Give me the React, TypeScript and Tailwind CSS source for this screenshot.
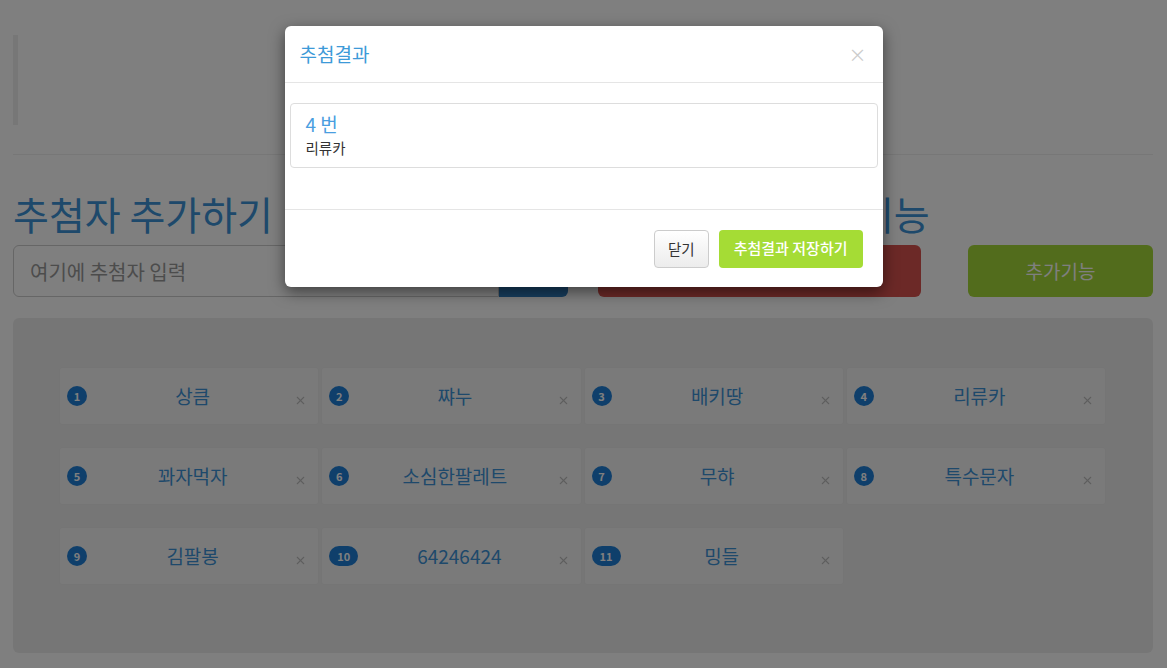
import { X } from 'lucide-react';

const players = [
  '상큼',
  '쨔누',
  '배키땅',
  '리류카',
  '꽈자먹자',
  '소심한팔레트',
  '무햐',
  '특수문자',
  '김팔봉',
  '64246424',
  '밍들',
];

const font = { fontFamily: '"Noto Sans CJK KR", "Noto Sans", sans-serif' };

function PlayerItem({ no, name }: { no: number; name: string }) {
  return (
    <div className="relative h-[58px] bg-[#f5f5f5] border border-[#eaeaea] rounded-[3px] flex items-center">
      <span
        className={`ml-[7px] h-[20px] ${
          no > 9 ? 'min-w-[29px]' : 'w-[20px]'
        } rounded-full bg-[#1f7fd6] text-white text-[11px] font-bold flex items-center justify-center`}
      >
        {no}
      </span>
      <span className="flex-1 text-center text-[19px] text-[#3d92d6] -ml-[20px]">
        {name}
      </span>
      <X
        className="absolute right-[11px] top-[26px] text-[#bdbdbd]"
        size={13}
        strokeWidth={2}
      />
    </div>
  );
}

export default function App() {
  return (
    <div className="relative w-[1167px] h-[668px] overflow-hidden bg-white" style={font}>
      {/* PAGE */}
      <div className="px-[13px] pt-[35px]">
        <div className="h-[90px] border-l-[5px] border-[#eeeeee]" />
        <hr className="mt-[29px] border-t border-[#eeeeee] w-[1140px]" />

        <div className="flex mt-[37px]">
          {/* ADD */}
          <div className="w-[555px]">
            <h1 className="text-[39px] leading-[42px] font-normal text-[#3d92d6] whitespace-nowrap">
              추첨자 추가하기
            </h1>
            <div className="flex mt-[11px] h-[52px]">
              <input
                placeholder="여기에 추첨자 입력"
                className="flex-1 h-full border border-[#cccccc] rounded-l-[6px] px-4 text-[20px] placeholder:text-[#999999] outline-none"
              />
              <button className="w-[69px] h-full bg-[#2e7dbf] text-white text-[18px] rounded-r-[6px]">
                추가
              </button>
            </div>
          </div>

          {/* DRAW */}
          <div className="w-[323px] ml-[30px]">
            <h1 className="text-[39px] leading-[42px] font-normal text-[#3d92d6] whitespace-nowrap">
              추첨하기와 추가기능
            </h1>
            <button className="mt-[11px] w-full h-[52px] bg-[#d9534f] text-white text-[18px] rounded-[6px]">
              추첨하기
            </button>
          </div>

          {/* EXTRA */}
          <div className="w-[185px] ml-[47px] pt-[53px]">
            <button className="w-full h-[52px] bg-[#a5d838] text-white text-[19px] rounded-[6px]">
              추가기능
            </button>
          </div>
        </div>

        {/* LIST */}
        <div className="mt-[21px] w-[1140px] bg-[#ededed] rounded-[6px] pt-[49px] pb-[68px] pl-[46px] pr-[47px]">
          <div className="grid grid-cols-4 gap-x-[2px] gap-y-[22px]">
            {players.map((p, i) => (
              <PlayerItem key={i} no={i + 1} name={p} />
            ))}
          </div>
        </div>
      </div>

      {/* BACKDROP */}
      <div className="absolute inset-0 bg-black/50" />

      {/* MODAL */}
      <div className="absolute inset-0 flex justify-center">
        <div className="mt-[26px] w-[598px] h-[261px] bg-white rounded-[6px] shadow-[0_5px_15px_rgba(0,0,0,0.5)] flex flex-col">
          <div className="h-[57px] border-b border-[#e5e5e5] flex items-center justify-between px-[15px]">
            <h4 className="text-[19px] text-[#3d9ad8]">추첨결과</h4>
            <button className="text-[#cccccc] text-[18px] leading-none mr-[1px]">×</button>
          </div>

          <div className="px-[5px] pt-[20px] pb-[41px] border-b border-[#e5e5e5]">
            <div className="h-[65px] border border-[#dddddd] rounded-[4px] px-[15px] pt-[9px]">
              <div className="text-[19px] leading-[22px] text-[#4a9ee0]">4 번</div>
              <div className="text-[14.5px] leading-[20px] mt-[3px] text-[#333333]">리류카</div>
            </div>
          </div>

          <div className="flex-1 flex items-center justify-end gap-[10px] pr-[20px]">
            <button className="h-[38px] px-[13px] border border-[#cccccc] rounded-[4px] bg-gradient-to-b from-white to-[#ececec] text-[14.5px] text-[#333333]">
              닫기
            </button>
            <button className="h-[38px] px-[15px] rounded-[4px] bg-[#a5dc35] text-[15px] font-medium text-white">
              추첨결과 저장하기
            </button>
          </div>
        </div>
      </div>
    </div>
  );
}
